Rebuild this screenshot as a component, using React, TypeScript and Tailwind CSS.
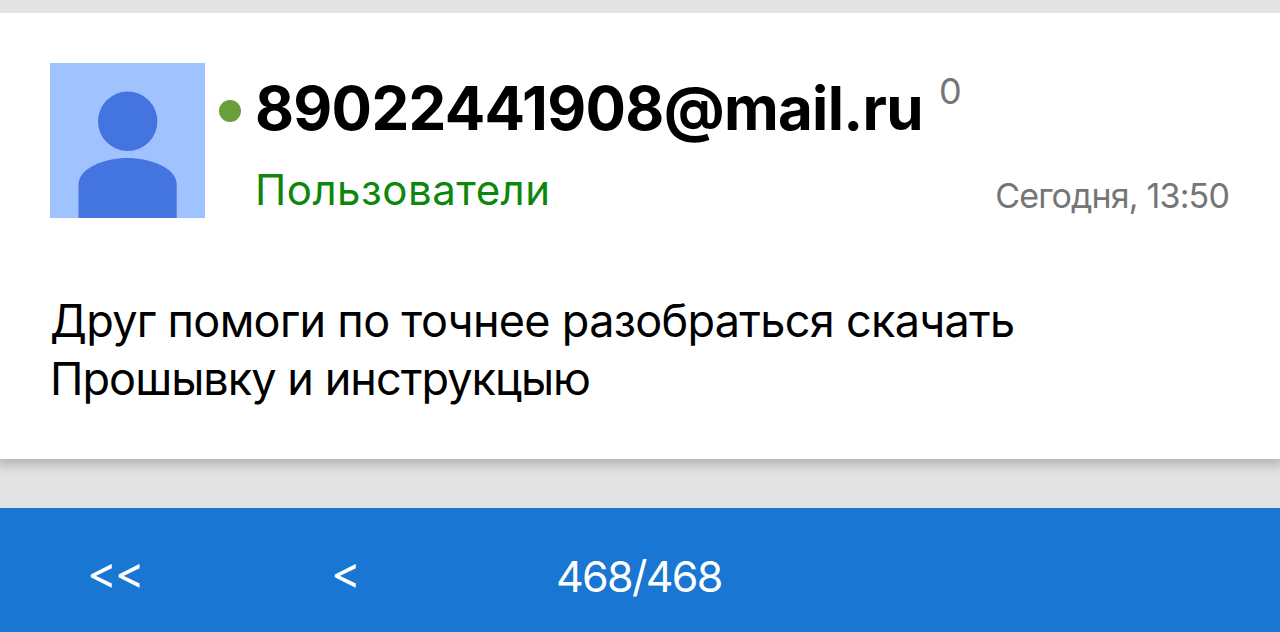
const AVATAR_BG = '#a0c3ff';
const AVATAR_FG = '#4374e0';

function Avatar() {
  return (
    <svg className="h-[155px] w-[155px] shrink-0" viewBox="0 0 155 155">
      <rect width="155" height="155" fill={AVATAR_BG} />
      <circle cx="77.7" cy="58.3" r="29.7" fill={AVATAR_FG} />
      <path d="M28.500 155v-33.500c0-17 27-26.500 49-26.500s49.200 9.500 49.200 26.500v33.500z" fill={AVATAR_FG} />
    </svg>
  );
}

function PostHeader() {
  return (
    <div className="flex h-[155px]">
      <Avatar />
      <span className="mt-[37px] ml-3.5 h-[22px] w-[22px] shrink-0 rounded-full bg-[#689f38]" />
      <div className="ml-[14px] flex-1">
        <div className="mt-[12px] flex h-[68px] items-start whitespace-nowrap">
          <span className="w-[667px] text-[60px] leading-[66px] font-bold tracking-[-0.7px]">89022441908@mail.ru</span>
          <span className="ml-[17px] text-[36px] leading-[32px] text-[#757575]">0</span>
        </div>
        <div className="mt-[20px] flex items-start justify-between whitespace-nowrap">
          <span className="text-[42px] leading-[54px] tracking-[0.5px] text-[#0c870c]">Пользователи</span>
          <span className="mt-[10px] mr-[1px] text-[34px] leading-[46px] tracking-[-0.85px] text-[#757575]">Сегодня, 13:50</span>
        </div>
      </div>
    </div>
  );
}

function Pager() {
  return (
    <div className="flex h-[124px] items-center bg-[#1976d2] pt-[12px] text-[43px] leading-[54px] whitespace-nowrap text-white">
      <span className="-mt-[7px] ml-[87px] w-[244px] text-[45px] tracking-[-2px]">&lt;&lt;</span>
      <span className="-mt-[7px] w-[225px] text-[45px]">&lt;</span>
      <span className="tracking-[-1.7px]">468/468</span>
    </div>
  );
}

export default function App() {
  return (
    <div className="h-[632px] w-full overflow-hidden bg-[#e4e4e4] font-['Inter',sans-serif] text-black">
      <div className="mt-[13px] h-[446px] bg-white px-[50px] pt-[50px] shadow-[0_1px_12px_5px_rgba(0,0,0,0.22)] [clip-path:inset(0_0_-24px_0)]">
        <PostHeader />
        <div className="mt-[74px] text-[45px] leading-[58px] whitespace-nowrap">
          <p className="tracking-[-0.7px]">Друг помоги по точнее разобраться скачать</p>
          <p className="tracking-[-0.95px]">Прошывку и инструкцыю</p>
        </div>
      </div>
      <div className="mt-[49px]">
        <Pager />
      </div>
    </div>
  );
}
